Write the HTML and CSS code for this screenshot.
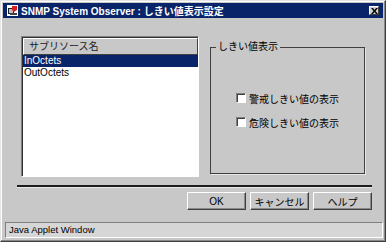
FILE: index.html
```html
<!DOCTYPE html>
<html lang="ja">
<head>
  <meta charset="UTF-8" />
  <title>SNMP System Observer : しきい値表示設定</title>
  <link rel="stylesheet" href="styles.css">
</head>
<body>
  <div class="window">
    <div class="titlebar">
      <svg class="app-icon" width="11" height="11" viewBox="0 0 11 11">
        <rect x="0" y="0" width="11" height="11" fill="#fff"/>
        <rect x="1" y="3" width="6" height="6" fill="#202020"/>
        <rect x="2" y="4" width="4" height="4" fill="#c0c0c0"/>
        <path d="M5 1 L10 1 L10 5 L7 7 L5 5 Z" fill="#d82020"/>
        <rect x="3" y="8" width="7" height="2" fill="#404040"/>
      </svg>
      <span class="title">SNMP System Observer : しきい値表示設定</span>
      <span class="close">
        <svg width="7" height="6" viewBox="0 0 7 6">
          <path d="M0 0 L2 0 L3.5 2 L5 0 L7 0 L4.5 3 L7 6 L5 6 L3.5 4 L2 6 L0 6 L2.5 3 Z" fill="#000"/>
        </svg>
      </span>
    </div>

    <div class="content">
      <div class="panes">
        <div class="listbox">
          <div class="list-header">サブリソース名</div>
          <div class="list-item selected">InOctets</div>
          <div class="list-item">OutOctets</div>
        </div>

        <fieldset class="group">
          <legend>しきい値表示</legend>
          <div class="checks">
            <label class="check"><span class="box"></span>警戒しきい値の表示</label>
            <label class="check"><span class="box"></span>危険しきい値の表示</label>
          </div>
        </fieldset>
      </div>

      <div class="separator"></div>

      <div class="buttons">
        <button class="btn">OK</button>
        <button class="btn">キャンセル</button>
        <button class="btn">ヘルプ</button>
      </div>
    </div>

    <div class="statusbar">Java Applet Window</div>
  </div>
</body>
</html>
```

FILE: styles.css
```css
/* Base */
* {
  margin: 0;
  padding: 0;
  box-sizing: border-box;
}
body {
  background: #fff;
  font-family: 'Liberation Sans', 'Noto Sans CJK JP', sans-serif;
  font-size: 10px;
  color: #000;
}
/* Window frame */
.window {
  width: 386px;
  height: 242px;
  background: #c8c8c8;
  border: 1px solid;
  border-color: #e4e4e4 #404040 #404040 #e4e4e4;
  box-shadow: inset -1px -1px 0 #888, inset 1px 1px 0 #fff;
  padding: 2px;
  display: flex;
  flex-direction: column;
}
/* Title bar */
.titlebar {
  height: 15px;
  background: #0a246a;
  color: #fff;
  display: flex;
  align-items: center;
  padding: 0 4px 0 4px;
}
.app-icon {
  flex: none;
  margin-right: 3px;
}
.title {
  font-weight: bold;
  font-size: 10px;
  white-space: nowrap;
  flex: 1;
}
.close {
  width: 10px;
  height: 9px;
  background: #d0d0d0;
  border: 1px solid;
  border-color: #fff #404040 #404040 #fff;
  display: flex;
  align-items: center;
  justify-content: center;
}
/* Content */
.content {
  flex: 1;
  padding: 18px 11px 0 14px;
}
.panes {
  display: flex;
  padding-left: 4px;
}
.listbox {
  width: 178px;
  height: 141px;
  background: #fff;
  border: 1px solid;
  border-color: #808080 #fff #fff #808080;
  box-shadow: inset 1px 1px 0 #303030;
  padding: 1px 0 0 1px;
}
.list-header {
  height: 17px;
  background: #c8c8c8;
  border: 1px solid;
  border-color: #fff #404040 #404040 #fff;
  padding-left: 5px;
  line-height: 15px;
  font-size: 10px;
  color: #202020;
}
.list-item {
  height: 12px;
  line-height: 12px;
  padding-left: 1px;
}
.list-item.selected {
  background: #0a246a;
  color: #fff;
}
/* Group box */
.group {
  margin-left: 11px;
  margin-top: 5px;
  width: 155px;
  height: 133px;
  border: 1px solid #404040;
  box-shadow: 1px 1px 0 #e8e8e8;
  padding: 0 0 0 25px;
}
.group legend {
  margin-left: -20px;
  padding: 0 2px;
  font-size: 10px;
  line-height: 12px;
}
.checks {
  margin-top: 38px;
  display: flex;
  flex-direction: column;
  gap: 10px;
}
.check {
  display: flex;
  align-items: center;
  height: 14px;
  gap: 3px;
}
.box {
  width: 10px;
  height: 10px;
  background: #fff;
  border: 1px solid;
  border-color: #808080 #fff #fff #808080;
  box-shadow: inset 1px 1px 0 #404040;
}
/* Separator and buttons */
.separator {
  margin-top: 8px;
  width: 355px;
  border-top: 2px solid #1c1c1c;
  border-bottom: 1px solid #e8e8e8;
}
.buttons {
  width: 355px;
  display: flex;
  justify-content: flex-end;
  gap: 4px;
  margin-top: 4px;
}
.btn {
  width: 59px;
  height: 18px;
  background: #c8c8c8;
  border: 1px solid;
  border-color: #fff #404040 #404040 #fff;
  box-shadow: inset -1px -1px 0 #888;
  font-family: 'Liberation Sans', 'Noto Sans CJK JP', sans-serif;
  font-size: 10px;
  color: #000;
}
/* Status bar */
.statusbar {
  height: 16px;
  margin: 0 0 1px 2px;
  background: #d6d6d6;
  border: 1px solid;
  border-color: #808080 #fff #fff #808080;
  padding-left: 3px;
  line-height: 14px;
  font-size: 9.5px;
}
```
